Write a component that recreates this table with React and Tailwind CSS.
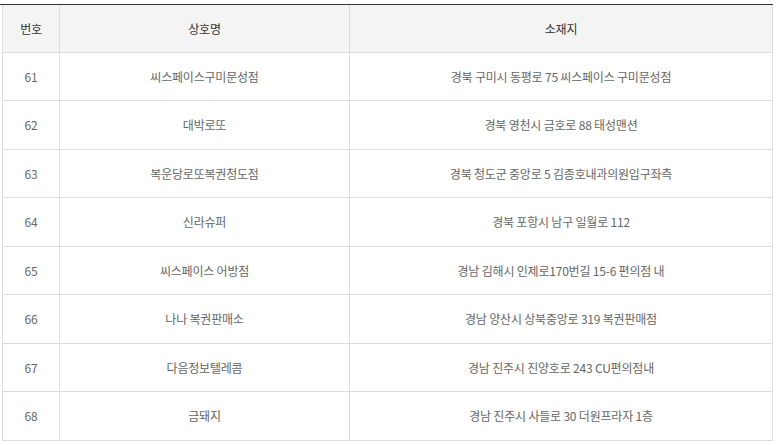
import React from "react";

const rows = [
  ["61", "씨스페이스구미문성점", "경북 구미시 동평로 75 씨스페이스 구미문성점"],
  ["62", "대박로또", "경북 영천시 금호로 88 태성맨션"],
  ["63", "복운당로또복권청도점", "경북 청도군 중앙로 5 김종호내과의원입구좌측"],
  ["64", "신라슈퍼", "경북 포항시 남구 일월로 112"],
  ["65", "씨스페이스 어방점", "경남 김해시 인제로170번길 15-6 편의점 내"],
  ["66", "나나 복권판매소", "경남 양산시 상북중앙로 319 복권판매점"],
  ["67", "다음정보텔레콤", "경남 진주시 진양호로 243 CU편의점내"],
  ["68", "금돼지", "경남 진주시 사들로 30 더원프라자 1층"],
];

export default function App() {
  return (
    <div
      className="w-[777px] h-[445px] bg-white overflow-hidden pt-[4px]"
      style={{ fontFamily: '"Noto Sans CJK KR", "Noto Sans", sans-serif' }}
    >
      <div className="border-t border-[#333] w-[773px]">
        <div className="ml-[2px] w-[771px] border-l border-r border-[#dddddd]">
          <div className="grid grid-cols-[57px_290px_1fr] bg-[#f4f4f4] h-[48px] border-b border-[#dddddd] text-[12px] tracking-[-0.2px] text-[#333]">
            <div className="flex items-center justify-center border-r border-[#dddddd]">번호</div>
            <div className="flex items-center justify-center border-r border-[#dddddd]">상호명</div>
            <div className="flex items-center justify-center">소재지</div>
          </div>
          {rows.map((r, i) => (
            <div
              key={r[0]}
              className={`grid grid-cols-[57px_290px_1fr] border-b border-[#dddddd] text-[12px] tracking-[-0.2px] text-[#666] ${i % 2 === 0 ? "h-[48px]" : "h-[49px]"}`}
            >
              <div className="flex items-center justify-center border-r border-[#dddddd]">{r[0]}</div>
              <div className="flex items-center justify-center border-r border-[#dddddd]">{r[1]}</div>
              <div className="flex items-center justify-center">{r[2]}</div>
            </div>
          ))}
        </div>
      </div>
    </div>
  );
}
